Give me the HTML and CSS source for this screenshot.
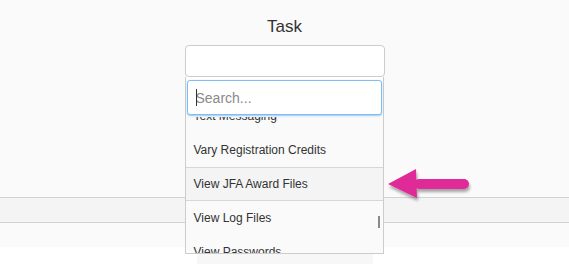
FILE: index.html
```html
<!DOCTYPE html>
<html lang="en">
<head>
    <meta charset="UTF-8">
    <meta name="viewport" content="width=device-width, initial-scale=1.0">
    <title>Task</title>
    <link rel="stylesheet" href="styles.css">
</head>
<body>

    <div class="panel">
        <h1 class="title">Task</h1>

        <div class="field">
            <div class="select-box"></div>

            <!-- open dropdown -->
            <div class="dropdown">
                <div class="search-wrap">
                    <input class="search" type="text" placeholder="Search...">
                    <span class="caret"></span>
                </div>
                <div class="results">
                    <ul class="results-list">
                        <li>Text Messaging</li>
                        <li>Vary Registration Credits</li>
                        <li class="hover">View JFA Award Files</li>
                        <li>View Log Files</li>
                        <li>View Passwords</li>
                    </ul>
                </div>
                <span class="scroll-thumb"></span>
            </div>
        </div>

        <div class="rows">
            <div class="row row-alt"></div>
            <div class="row"></div>
        </div>
    </div>

    <div class="footer-strip"></div>

    <!-- annotation arrow -->
    <svg class="arrow" width="96" height="44" viewBox="0 0 96 44">
        <defs>
            <filter id="shadow" x="-20%" y="-30%" width="140%" height="170%">
                <feDropShadow dx="1" dy="3" stdDeviation="1.6" flood-color="#000" flood-opacity="0.35"/>
            </filter>
        </defs>
        <g filter="url(#shadow)" fill="#df2a98">
            <polygon points="4,20 32,5 33,34"/>
            <rect x="30" y="15" width="55" height="10" rx="5"/>
        </g>
    </svg>

</body>
</html>
```

FILE: styles.css
```css
body {
    margin: 0;
    padding: 0;
    background-color: #ffffff;
    font-family: "Liberation Sans", Arial, sans-serif;
    color: #333;
    position: relative;
    height: 264px;
    overflow: hidden;
}

/* main panel */
.panel {
    background-color: #fafafa;
    padding-top: 17px;
    height: 230px;
}

.title {
    margin: 0;
    font-size: 17px;
    font-weight: normal;
    line-height: 20px;
    text-align: center;
    color: #333;
}

/* select field */
.field {
    position: relative;
    width: 200px;
    margin: 8px auto 0;
}

.select-box {
    box-sizing: border-box;
    height: 32px;
    background-color: #fff;
    border: 1px solid #ccc;
    border-radius: 4px;
}

/* dropdown */
.dropdown {
    position: absolute;
    top: 32px;
    left: 0;
    width: 199px;
    height: 177px;
    box-sizing: border-box;
    background-color: #fafafa;
    border: 1px solid #ccc;
    border-top: none;
    z-index: 10;
}

.search-wrap {
    position: relative;
    padding: 3px 1px 2px 1px;
    background-color: #fff;
}

.search {
    display: block;
    box-sizing: border-box;
    width: 100%;
    height: 35px;
    margin: 0;
    padding: 0 8px;
    font-family: "Liberation Sans", Arial, sans-serif;
    font-size: 14px;
    color: #333;
    background-color: #fff;
    border: 1px solid #80bdf5;
    border-radius: 3px;
    box-shadow: 0 1px 2px rgba(102, 175, 233, 0.7);
    outline: none;
}

.search::placeholder {
    color: #8a8a8a;
}

.caret {
    position: absolute;
    left: 10px;
    top: 12px;
    width: 1px;
    height: 17px;
    background-color: #333;
}

.results {
    height: 136px;
    overflow: hidden;
}

.results-list {
    list-style: none;
    margin: -18px 0 0;
    padding: 0;
}

.results-list li {
    box-sizing: border-box;
    height: 34px;
    line-height: 34px;
    padding: 0 8px;
    font-size: 12px;
    color: #333;
    white-space: nowrap;
}

.results-list li.hover {
    line-height: 32px;
    background-color: #f4f4f4;
    border-top: 1px solid #d6d6d6;
    border-bottom: 1px solid #d6d6d6;
}

.scroll-thumb {
    position: absolute;
    right: 3px;
    top: 139px;
    width: 2px;
    height: 12px;
    background-color: #8a8a8a;
}

/* table rows behind dropdown */
.rows {
    margin-top: 120px;
}

.row {
    height: 24px;
}

.row-alt {
    height: 24px;
    background-color: #f4f4f4;
    border-top: 1px solid #d2d2d2;
    border-bottom: 1px solid #d2d2d2;
}

.footer-strip {
    width: 176px;
    height: 10px;
    margin: 7px 0 0 197px;
    background-color: #f7f7f7;
}

/* annotation arrow */
.arrow {
    position: absolute;
    left: 384px;
    top: 164px;
}
```
